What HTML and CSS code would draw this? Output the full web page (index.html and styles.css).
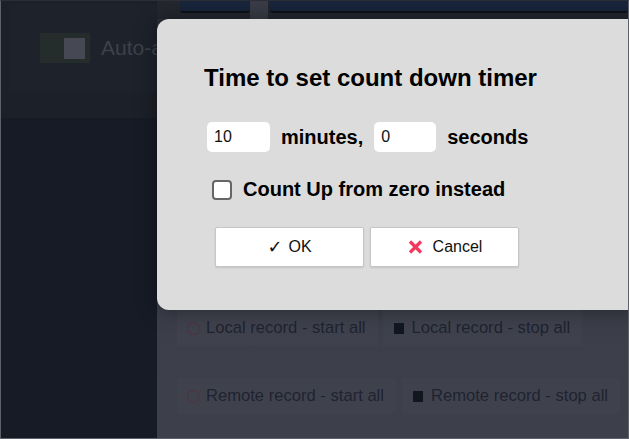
FILE: index.html
```html
<!DOCTYPE html>
<html lang="en">
<head>
<meta charset="utf-8">
<title>Timer</title>
<link rel="stylesheet" href="styles.css">
</head>
<body>
<div class="app">
  <aside class="sidebar">
    <div class="side-top">
      <div class="side-card">
        <span class="toggle"><span class="knob"></span></span>
        <span class="toggle-label">Auto-advance</span>
      </div>
    </div>
  </aside>
  <main class="main">
    <div class="topbar">
      <div class="tb-btn tb-a"></div>
      <div class="tb-sep"></div>
      <div class="tb-btn tb-b"></div>
    </div>
    <div class="rec-rows">
      <div class="rec-row">
        <button class="rec-btn"><span class="ic-circle"></span>Local record - start all</button>
        <button class="rec-btn stop"><span class="ic-square"></span>Local record - stop all</button>
      </div>
      <div class="rec-row">
        <button class="rec-btn"><span class="ic-circle"></span>Remote record - start all</button>
        <button class="rec-btn stop"><span class="ic-square"></span>Remote record - stop all</button>
      </div>
    </div>
  </main>
  <div class="dialog">
    <h2 class="dlg-title">Time to set count down timer</h2>
    <div class="time-row">
      <input class="num" type="text" value="10">
      <span class="unit">minutes,</span>
      <input class="num" type="text" value="0">
      <span class="unit">seconds</span>
    </div>
    <label class="check-row">
      <input class="check" type="checkbox">
      <span>Count Up from zero instead</span>
    </label>
    <div class="btn-row">
      <button class="dlg-btn"><span class="tick">✓</span>OK</button>
      <button class="dlg-btn"><svg class="xic" width="17" height="16" viewBox="0 0 17 16"><path d="M3 2.5 L14 13.5 M14 2.5 L3 13.5" stroke="#f2385c" stroke-width="3.2" fill="none"/></svg>Cancel</button>
    </div>
  </div>
</div>
</body>
</html>
```
FILE: styles.css
```css
html, body {
  margin: 0;
  padding: 0;
}
body {
  font-family: "Liberation Sans", Arial, sans-serif;
  background: #161b26;
}
.app {
  position: relative;
  width: 629px;
  height: 439px;
  box-sizing: border-box;
  border: 1px solid #5e616a;
  border-top-color: #2b2e35;
  overflow: hidden;
  display: flex;
}
.sidebar {
  width: 156px;
  flex: none;
  background: #161b26;
  display: flex;
  flex-direction: column;
}
.side-top {
  height: 117px;
  background: #1c2028;
  box-sizing: border-box;
  padding: 3px 0 0 8px;
}
.side-card {
  height: 88px;
  background: #1e222b;
  display: flex;
  align-items: center;
  padding-left: 31px;
  gap: 11px;
  overflow: hidden;
  white-space: nowrap;
}
.toggle {
  width: 50px;
  height: 30px;
  background: #252d2c;
  display: flex;
  align-items: center;
  justify-content: flex-end;
  padding-right: 5px;
  box-sizing: border-box;
  flex: none;
}
.knob {
  width: 21px;
  height: 21px;
  background: #464954;
}
.toggle-label {
  color: #3d414b;
  font-size: 21px;
}
.main {
  flex: 1;
  background: linear-gradient(#2b2e37 0%, #353842 40%, #3c3f4a 75%, #3d404b 100%);
  display: flex;
  flex-direction: column;
}
.topbar {
  height: 18px;
  display: flex;
  align-items: flex-start;
  padding-left: 23px;
  background: #24272f;
}
.tb-btn {
  height: 10px;
  background: #18253b;
  border-bottom: 2px solid #0c111b;
  border-radius: 0 0 3px 3px;
}
.tb-a { width: 70px; }
.tb-sep { width: 18px; height: 18px; background: #3a3d46; margin-right: 2px; }
.tb-b { flex: 1; }
.rec-rows {
  padding: 291px 0 0 20px;
  display: flex;
  flex-direction: column;
  gap: 32px;
}
.rec-row {
  display: flex;
  gap: 6px;
}
.rec-row:first-child { gap: 5px; }
.rec-btn {
  height: 36px;
  border: none;
  background: #3f424d;
  color: #1f2330;
  font-family: "Liberation Sans", Arial, sans-serif;
  font-size: 16.6px;
  display: inline-flex;
  align-items: center;
  gap: 6px;
  padding: 0 12px 0 10px;
  white-space: nowrap;
}
.rec-btn.stop { gap: 8px; padding-left: 11px; }
.ic-circle {
  width: 11px;
  height: 11px;
  border: 1px solid #55303a;
  border-radius: 50%;
  flex: none;
}
.ic-square {
  width: 10px;
  height: 11px;
  background: #12161f;
  flex: none;
}
.dialog {
  position: absolute;
  left: 156px;
  top: 18px;
  width: 520px;
  height: 291px;
  box-sizing: border-box;
  background: #dcdcdc;
  border-radius: 12px;
  box-shadow: 0 0 22px rgba(0, 0, 0, 0.4);
  padding: 45px 0 0 47px;
  color: #000;
}
.dlg-title {
  margin: 0;
  font-size: 24px;
  line-height: 28px;
  font-weight: bold;
}
.time-row {
  margin-top: 30px;
  display: flex;
  align-items: center;
  gap: 11px;
  padding-left: 3px;
}
.num {
  width: 63px;
  height: 30px;
  box-sizing: border-box;
  border: none;
  border-radius: 5px;
  background: #fff;
  font-family: "Liberation Sans", Arial, sans-serif;
  font-size: 16px;
  padding: 0 0 0 7px;
  color: #111;
  outline: none;
}
.num + .unit + .num { width: 62px; }
.unit {
  font-size: 20px;
  font-weight: bold;
}
.check-row {
  margin-top: 26px;
  display: flex;
  align-items: center;
  gap: 11px;
  padding-left: 8px;
  font-size: 20px;
  font-weight: bold;
}
.check {
  appearance: none;
  -webkit-appearance: none;
  margin: 0;
  width: 20px;
  height: 20px;
  box-sizing: border-box;
  border: 2px solid #666;
  border-radius: 4px;
  background: #fff;
}
.btn-row {
  margin-top: 26px;
  padding-left: 11px;
  display: flex;
  gap: 6px;
}
.dlg-btn {
  width: 149px;
  height: 40px;
  box-sizing: border-box;
  background: #fff;
  border: 1px solid #c6c6c6;
  border-radius: 2px;
  box-shadow: 0 1px 2px rgba(0, 0, 0, 0.12);
  font-family: "Liberation Sans", Arial, sans-serif;
  font-size: 16px;
  color: #111;
  display: flex;
  align-items: center;
  justify-content: center;
  gap: 6px;
  padding: 0;
}
.dlg-btn + .dlg-btn { gap: 9px; }
.tick {
  font-family: "DejaVu Sans", sans-serif;
  font-size: 18px;
  font-weight: bold;
  line-height: 1;
}
.xic { flex: none; }
```
